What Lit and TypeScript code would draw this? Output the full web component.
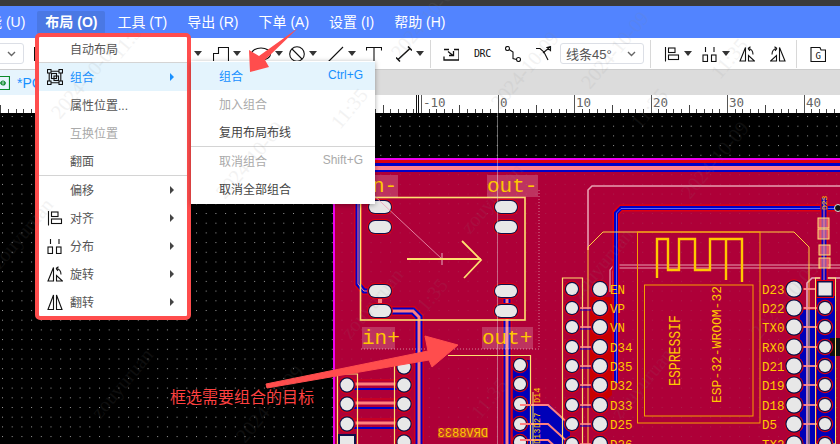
import { LitElement, html, css, svg } from "lit";
import { customElement } from "lit/decorators.js";

const ic = (body: unknown, w = 16) =>
  html`<svg class="ic" width=${w} height="16" viewBox="0 0 ${w} 16">${body}</svg>`;

const I = {
  group: svg`<rect x=".5" y=".5" width="3.5" height="3.5"/><rect x="12" y=".5" width="3.5" height="3.5"/><rect x=".5" y="12" width="3.5" height="3.5"/><rect x="12" y="12" width="3.5" height="3.5"/><path d="M4 2.2H12M2.2 4V12M13.8 4V12M4 13.8H12"/><rect x="4.5" y="4.5" width="5" height="5"/><rect x="7" y="7" width="4.5" height="4.5"/>`,
  align: svg`<path d="M1.5 1V15.5"/><rect x="4.5" y="2" width="6.5" height="4.5"/><rect x="4.5" y="9" width="10" height="4.5"/>`,
  dist: svg`<path d="M3.5 1V6M12 1V6"/><rect x="1" y="9" width="4.5" height="6.5"/><rect x="9.5" y="9" width="4.5" height="6.5"/>`,
  rot: svg`<path d="M1 15L6.5 1.5V15Z"/><path d="M9.5 15H15.5L9.5 9.5Z"/><path d="M9 2.5Q14 3 14 8.5M9 2.5L11.5 .8M9 2.5L11 4.8"/>`,
  rot2: svg`<path d="M15 15L9.5 1.5V15Z"/><path d="M6.5 15H.5L6.5 9.5Z"/><path d="M7 2.5Q2 3 2 8.5M7 2.5L4.5 .8M7 2.5L5 4.8"/>`,
  flip: svg`<path d="M1 15.5L6.5 1V15.5Z"/><path d="M9.5 15.5V1L15 15.5Z"/>`,
  step: svg`<path d="M.5 15V7.5H5.5V1.5H15.5V15"/>`,
  oval: svg`<ellipse cx="10" cy="8" rx="9.5" ry="6"/>`,
  nope: svg`<circle cx="8" cy="8" r="7.3"/><path d="M3 3L13 13"/>`,
  line: svg`<path d="M.5 15.5L15 1"/>`,
  bar: svg`<path d="M1.2 1V15" stroke-width="2.4"/>`,
  text: svg`<path d="M.5 4.5V1.5H15.5V4.5M8 1.5V16"/>`,
  dim: svg`<path d="M1.5 14L14.5 2M0 11.5L4 15.5M12 .5L16 4.5" stroke-width="1.5"/>`,
  swap: svg`<path d="M1 3.5H6M11 3.5H16V14H1V10.5M5 5.5L10 9.5M10.5 5V9.5H6" stroke-width="1.3"/>`,
  route: svg`<circle cx="2.5" cy="2.5" r="2"/><circle cx="13.5" cy="13.5" r="2"/><path d="M4.2 3.5L8 6V12.5L11.5 13.5"/>`,
  fan: svg`<path d="M0 2.5H4L8 6L12 14"/><path d="M7 7L14 1M14.5 .5V4.5L11 1.5Z" />`,
  folder: svg`<path d="M1 15.5V1.5H10L11 4H15.5V15.5Z"/><text x="8.2" y="13" class="g">G</text>`,
};

const menuRows: any[] = [
  { t: "自动布局", first: true },
  { sep: true },
  { t: "组合", icon: I.group, arrow: true, on: true },
  { t: "属性位置..." },
  { t: "互换位置", off: true },
  { t: "翻面" },
  { sep: true },
  { t: "偏移", arrow: true },
  { t: "对齐", icon: I.align, arrow: true },
  { t: "分布", icon: I.dist, arrow: true },
  { t: "旋转", icon: I.rot, arrow: true },
  { t: "翻转", icon: I.flip, arrow: true },
];

const subRows: any[] = [
  { t: "组合", k: "Ctrl+G", on: true },
  { t: "加入组合", off: true },
  { t: "复用布局布线" },
  { sep: true },
  { t: "取消组合", k: "Shift+G", off: true },
  { t: "取消全部组合" },
];

const RED = "#e00010";
const NAVY = "#10104a";

function pad(x: number, y: number, r: number) {
  return svg`<circle cx=${x} cy=${y} r=${r + 2.2} fill=${RED}/><circle cx=${x} cy=${y} r=${r + 1.2} fill=${NAVY}/><circle cx=${x} cy=${y} r=${r} fill="#e8e8e8"/>`;
}
function oval(x: number, y: number) {
  return svg`<rect x=${x - 13} y=${y - 8} width="26" height="16" rx="8" fill=${RED}/><rect x=${x - 12} y=${y - 7} width="24" height="14" rx="7" fill=${NAVY}/><rect x=${x - 11} y=${y - 6} width="22" height="12" rx="6" fill="#e8e8e8"/>`;
}
function trace(d: string, w = 3) {
  return svg`<path d=${d} fill="none" stroke=${RED} stroke-width=${w + 6.5}/><path d=${d} fill="none" stroke="#0000c8" stroke-width=${w + 4}/><path d=${d} fill="none" stroke="#ff8080" stroke-width=${w}/>`;
}
function silk(x: number, y: number, t: string, size = 12.5) {
  return svg`<text x=${x} y=${y} class="silk" font-size=${size}>${t}</text>`;
}
function big(x: number, y: number, w: number, t: string) {
  return svg`<rect x=${x} y=${y} width=${w} height="22" fill="#fff" opacity=".2"/><text x=${x} y=${y + 17} class="silk" font-size="21">${t}</text>`;
}

const rowY = [289, 308, 327, 347, 366, 385, 405, 424, 444];
const leftNames = ["EN", "VP", "VN", "D34", "D35", "D32", "D33", "D25", "D26"];
const rightNames = ["D23", "D22", "TX0", "RX0", "D21", "D19", "D18", "D5", "TX2"];

@customElement("app-root")
export class AppRoot extends LitElement {
  static styles = css`
    :host {
      display: block;
      width: 840px;
      height: 444px;
      position: relative;
      overflow: hidden;
      background: #000;
      font-family: "Liberation Sans", "Noto Sans CJK SC", sans-serif;
    }
    .top { height: 6px; background: #3a3a3a; }
    .menubar {
      height: 32px;
      background: #5284ff;
      display: flex;
      align-items: center;
      gap: 4px;
      margin-left: -34px;
      color: #fff;
      font-size: 14px;
    }
    .mi { padding: 0 8px; height: 23px; line-height: 23px; border-radius: 2px; white-space: nowrap; }
    .mi.act { background: #4a78e4; font-weight: 700; }
    .toolbar {
      height: 32px;
      box-sizing: border-box;
      background: #fff;
      border-bottom: 1px solid #ccc;
      display: flex;
      align-items: center;
      overflow: hidden;
    }
    .toolbar > * { flex: none; }
    .ic { display: block; fill: none; stroke: #111; stroke-width: 1.1; flex: none; }
    .g { font: 9px "DejaVu Sans Mono", monospace; fill: #111; stroke: none; text-anchor: middle; }
    .select {
      height: 21px;
      box-sizing: border-box;
      border: 1px solid #dcdfe6;
      border-radius: 3px;
      display: flex;
      align-items: center;
      justify-content: space-between;
      font-size: 13px;
      color: #555;
      padding: 0 7px 0 5px;
    }
    .select.a { width: 84px; margin-left: -60px; }
    .select.b { width: 84px; margin-left: 8px; }
    .chev { width: 9px; height: 6px; fill: none; stroke: #666; stroke-width: 1.4; flex: none; }
    .caret { width: 0; height: 0; border: 4px solid transparent; border-top: 5px solid #333; border-bottom: 0; margin-left: 4px; }
    .sep { width: 1px; height: 28px; background: #d8d8d8; }
    .m6 { margin-left: 6px; }
    .m7 { margin-right: 7px; }
    .r6 { margin-right: 6px; }
    .m9 { margin-right: 9px; }
    .m10 { margin-right: 10px; }
    .m11 { margin-right: 11px; }
    .m12 { margin-right: 12px; }
    .m13 { margin-right: 13px; }
    .m14 { margin-right: 14px; }
    .m15 { margin-right: 15px; }
    .filler { width: 60px; }
    .drc { width: 16px; font: 10px "DejaVu Sans Mono", monospace; letter-spacing: -.4px; color: #111; }
    .tabs {
      height: 25px;
      background: #dcdcdc;
      display: flex;
    }
    .tab {
      width: 60px;
      background: #e6f4fd;
      display: flex;
      align-items: center;
      gap: 7px;
      color: #1890ff;
      font-size: 14px;
      overflow: hidden;
    }
    .tabic { width: 10px; height: 14px; flex: none; fill: none; stroke: #0a8a2a; stroke-width: 1.2; }
    .ruler { display: block; width: 840px; height: 18px; background: #fff; }
    .ruler text { font: 12.5px "DejaVu Sans Mono", monospace; fill: #666; }
    .canvas { display: block; width: 840px; height: 331px; }
    .silk { font-family: "Liberation Mono", "DejaVu Sans Mono", monospace; fill: #ffc800; }
    .note { font-family: "Noto Sans CJK SC", sans-serif; font-size: 16px; fill: #ff4040; }
    .menu {
      position: absolute;
      left: 35px;
      top: 33px;
      width: 156px;
      box-sizing: border-box;
      background: #fff;
      border: 4px solid #ff4d4d;
      border-radius: 5px;
      font-size: 12px;
      color: #555;
    }
    .sub {
      position: absolute;
      left: 191px;
      top: 61px;
      width: 184px;
      box-sizing: border-box;
      padding: 1px 0;
      background: #fff;
      box-shadow: 0 1px 5px rgba(0, 0, 0, .35);
      font-size: 12px;
      color: #444;
    }
    .row {
      height: 28px;
      box-sizing: border-box;
      display: flex;
      align-items: center;
      position: relative;
      white-space: nowrap;
    }
    .menu .row { padding: 0 13px 2px 31px; }
    .sub .row { padding: 0 12px 2px 28px; justify-content: space-between; }
    .row.first { height: 25px; }
    .row.on { background: #e4f4fd; color: #1890ff; }
    .row.off { color: #aaa; }
    .row .mic { position: absolute; left: 8px; top: 6px; }
    .arrow { margin-left: auto; margin-top: 2px; width: 0; height: 0; border: 4px solid transparent; border-left: 4px solid #444; border-right: 0; }
    .row.on .arrow { border-left-color: #1890ff; }
    .line { height: 1px; background: #d4d4d4; }
    .over { position: absolute; left: 0; top: 0; width: 840px; height: 444px; pointer-events: none; }
    .wm { font: 20px "Liberation Serif", serif; fill: #888; opacity: .1; }
  `;

  private renderRows(rows: any[]) {
    return rows.map((r) =>
      r.sep
        ? html`<div class="line"></div>`
        : html`<div class="row ${r.first ? "first" : ""} ${r.on ? "on" : ""} ${r.off ? "off" : ""}">
            ${r.icon ? html`<span class="mic">${ic(r.icon)}</span>` : ""}
            <span>${r.t}</span>
            ${r.k ? html`<span>${r.k}</span>` : ""}
            ${r.arrow ? html`<span class="arrow"></span>` : ""}
          </div>`
    );
  }

  private renderRuler() {
    const ticks = [];
    for (let k = -70; k <= 45; k++) {
      const x = Math.round(497.5 + 7.65 * k) + 0.5;
      const h = k % 10 === 0 ? 18 : k % 5 === 0 ? 8 : 4;
      ticks.push(svg`<path d="M${x} ${18 - h}V18" stroke=${k % 10 === 0 ? "#555" : "#444"}/>`);
      if (k % 10 === 0 && k >= -10)
        ticks.push(svg`<text x=${x + 1.5} y="12">${k === -10 ? "-10" : k}</text>`);
    }
    return html`<svg class="ruler" viewBox="0 0 840 18">
      ${ticks}
      <path d="M416.5 0V18M418.5 0V18" stroke="#111"/>
    </svg>`;
  }

  private renderBoard() {
    const lower = [385, 404, 424, 442];
    return svg`
      <defs>
        <pattern id="dots" width="9.7" height="9.7" patternUnits="userSpaceOnUse" x="2" y="116">
          <rect width="1" height="1" fill="#9a9a9a"/>
        </pattern>
      </defs>
      <rect x="0" y="113" width="840" height="331" fill="#000"/>
      <rect x="0" y="113" width="840" height="331" fill="url(#dots)"/>

      <rect x="333" y="158" width="507" height="286" fill="#ae0038"/>
      <rect x="333" y="158" width="507" height="286" fill="url(#dots)" opacity=".2"/>
      <rect x="333" y="158" width="507" height="2" fill="#f000f0"/>
      <rect x="333" y="158" width="2" height="286" fill="#f000f0"/>
      <rect x="335" y="160" width="505" height="3" fill="#e00010"/>
      <rect x="335" y="163" width="505" height="3" fill="#0000c8"/>
      <rect x="335" y="166" width="505" height="4" fill="#ff7f8f"/>
      <rect x="335" y="170" width="505" height="2" fill="#0000c8"/>

      <!-- copper zones -->
      <path d="M590 297H612V395L600 405H590Z" fill="#c80000"/>
      <path d="M513 360H530V405H550L570 425V444H513Z" fill="#0000b8"/>
      <path d="M800 310H815V444H800ZM817 296H836V444H817Z" fill="#0000b8"/>
      <rect x="830" y="338" width="10" height="18" fill="#111"/>

      <!-- pale outline traces -->
      <path d="M588 250V190L592 186H840" fill="none" stroke="#e8a0b0" stroke-width="1.6"/>
      <path d="M610 292V270L614 265H840M613 292V271L616 268H840" fill="none" stroke="#e8a0b0" stroke-width="1.2"/>
      <path d="M807 444V283L812 278H840" fill="none" stroke="#e8a8c0" stroke-width="1.6"/>
      <path d="M616 383V213L621 208H840" fill="none" stroke=${RED} stroke-width="7"/>
      <path d="M616 383V213L621 208H840" fill="none" stroke="#0000c8" stroke-width="4"/>
      <path d="M616.5 383V213L621 208.5H840" fill="none" stroke="#7080ff" stroke-width=".8"/>

      <!-- module arrow selection -->
      ${trace("M358 178V284L364 291H372", 1)}
      ${trace("M380 311H413L419 317V444", 3)}
      ${trace("M507 291V444", 3)}
      <path d="M380 291V311" stroke="#ff8080" stroke-width="4"/>
      <rect x="360.5" y="197.5" width="164.5" height="122.5" fill="none" stroke="#ffe070" stroke-width="1.6"/>
      ${[207, 227, 291, 311].map((y) => svg`${oval(380, y)}${oval(506, y)}`)}
      <path d="M368 190L442 259" stroke="#f0a0b8" stroke-width=".8"/>
      <path d="M442 253V265M436 259H448" stroke="#fff" stroke-width=".7"/>
      <path d="M407 259H481M462 241L481 260L464 278" fill="none" stroke="#ffe070" stroke-width="1.8"/>
      <path d="M497.5 113V444" stroke="#e8e8e8" stroke-width=".8" opacity=".55"/>
      <path d="M539 190V349H359" fill="none" stroke="#e0a0b0" stroke-width=".8" stroke-dasharray="1 2"/>
      <path d="M448 355.5H530.5V444" fill="none" stroke="#ffe070" stroke-width="1.2"/>
      ${big(372, 175, 26, "n-")}
      ${big(487, 175, 51, "out-")}
      ${big(362, 327, 33, "in+")}
      ${big(482, 327, 51, "out+")}

      <!-- lower left header -->
      ${[385, 404, 424].map(
        (y) => svg`<path d="M347 ${y - 1}H404" stroke="#ff8080" stroke-width="3"/><path d="M347 ${y + 4}H404" stroke="#0000c8" stroke-width="2"/><path d="M347 ${y - 5}H404" stroke=${RED} stroke-width="1"/>`
      )}
      <path d="M337.5 444V374H357.5V444M394.5 444V365" fill="none" stroke="#ffe070" stroke-width="1.2"/>
      ${pad(404, 367, 6.5)}
      ${lower.map((y) => pad(404, y, 6.5))}
      ${lower.slice(0, 3).map((y) => pad(347, y, 6.5))}
      <rect x="338" y="434" width="18" height="14" fill=${NAVY}/><rect x="340" y="436" width="14" height="12" fill="#e8e8e8"/>

      <!-- middle header -->
      ${[365, 384, 404, 424, 442].map((y) => pad(520, y, 6))}
      ${[405, 424, 440].map((y) => svg`<path d="M520 ${y}H548L570 ${y + 20}" fill="none" stroke="#ff8080" stroke-width="2"/>`)}
      <text class="silk" font-size="8.5" transform="translate(540 428) rotate(-90)">D27</text>
      <text class="silk" font-size="8.5" transform="translate(540 403) rotate(-90)">D14</text>
      <text class="silk" font-size="8.5" transform="translate(540 444) rotate(-90)">D13</text>
      <path d="M533 392V444" fill="none" stroke="#ffe070" stroke-width="1"/>
      <rect x="438" y="428" width="50" height="10" fill="#ffc800" opacity=".25"/>
      <text class="silk" font-size="12" transform="translate(488 437) scale(-1 1)">DRV8833</text>

      <!-- ESP module outline -->
      <path d="M588 444V247L603 232H794L809 247V444" fill="none" stroke="#ffd040" stroke-width="1"/>
      <rect x="637.5" y="232" width="122.5" height="191" fill="none" stroke="#f5a000" stroke-width="1"/>
      <rect x="644.5" y="285" width="108.5" height="131" fill="none" stroke="#f5a000" stroke-width="1"/>
      <path d="M657 278V239H668V270H679V239H695V270H710V239H742V282M726 239V280" fill="none" stroke="#ffc800" stroke-width="2.4"/>
      <text class="silk" font-size="16" textLength="71" lengthAdjust="spacingAndGlyphs" transform="translate(680 386) rotate(-90)">ESPRESSIF</text>
      <text class="silk" font-size="13" transform="translate(721 403) rotate(-90)">ESP-32-WROOM-32</text>

      <!-- left headers -->
      <path d="M562.5 444V278H582.5V444" fill="none" stroke="#ffe070" stroke-width="1.2"/>
      ${rowY.slice(1).map((y) => svg`<path d="M572 ${y}H600" stroke="#ff9090" stroke-width="1.6"/><path d="M572 ${y + 2}H600" stroke="#0000c8" stroke-width="1"/>`)}
      ${rowY.map((y) => pad(572, y, 6))}
      ${rowY.map((y) => pad(600, y, 7))}
      ${leftNames.map((n, i) => silk(610, rowY[i] + 4.5, n))}

      <!-- right headers -->
      ${rowY.slice(0, 8).map((y) => svg`<path d="M794 ${y}H825" stroke="#ff9090" stroke-width="1.8"/>`)}
      <rect x="815.5" y="278" width="20" height="166" fill="none" stroke="#ffe070" stroke-width="1"/>
      ${trace("M824 198V289", 1)}
      ${rowY.map((y) => pad(794, y, 7.5))}
      ${rowY.slice(1).map((y) => pad(825, y, 6))}
      <rect x="816" y="280" width="18" height="18" fill=${RED}/>
      <rect x="817" y="281" width="16" height="16" fill=${NAVY}/>
      <rect x="818.5" y="282.5" width="13" height="13" fill="#e8e8e8"/>
      ${rightNames.map((n, i) => silk(762, rowY[i] + 4.5, n))}
      ${[[818, 218], [818, 229], [819, 245], [819, 258]].map(
        ([x, y]) => svg`<rect x=${x} y=${y} width="11" height="10" fill="#ff9090" fill-opacity=".6" stroke="#ffe070" stroke-width="1"/>`
      )}
      <text class="silk" font-size="8" transform="translate(827 210) rotate(-90)">D23</text>
      <circle cx="838" cy="208" r="3.5" fill="#111" stroke="#ddd" stroke-width="1"/>
      <text x="170" y="403" class="note">框选需要组合的目标</text>
    `;
  }

  render() {
    const menus = ["功能 (U)", "布局 (O)", "工具 (T)", "导出 (R)", "下单 (A)", "设置 (I)", "帮助 (H)"];
    const wm: [number, number, string][] = [
      [60, 120, "2024-10-09"], [120, 60, "11:35"], [0, 270, "zouyuruan"], [100, 420, "zouyuruan"],
      [225, 200, "2024-10-09"], [340, 130, "11:35"], [400, 60, "2024-10-09"], [245, 444, "2024-10-09"],
      [350, 340, "zouyuruan"], [470, 235, "zouyuruan"], [500, 110, "2024-10-09"], [640, 130, "11:35"],
      [590, 90, "2024-10-09"], [720, 80, "11:35"], [580, 300, "zouyuruan"], [690, 200, "2024-10-09"],
      [480, 420, "11:35"], [620, 420, "zouyuruan"], [760, 340, "2024-10-09"], [420, 320, "11:35"],
    ];
    return html`
      <div class="top"></div>
      <div class="menubar">
        ${menus.map((m, i) => html`<div class="mi ${i === 1 ? "act" : ""}">${m}</div>`)}
      </div>
      <div class="toolbar">
        <div class="select a"><span></span><svg class="chev" viewBox="0 0 9 6"><path d="M1 1L4.5 4.5L8 1"/></svg></div>
        <div class="m10"></div>
        <div class="m7">${ic(I.bar)}</div>
        <div class="m7">${ic(I.line)}</div>
        <div class="m7">${ic(I.line)}</div>
        <div class="filler m11"></div>
        ${ic(I.line)}<span class="caret m11"></span>
        ${ic(I.step)}<span class="caret m10"></span>
        ${ic(I.oval, 20)}<span class="caret r6"></span>
        ${ic(I.nope)}<span class="caret m11"></span>
        ${ic(I.line)}<span class="caret m10"></span>
        <span class="m14">${ic(I.text)}</span>
        ${ic(I.dim)}<span class="caret"></span>
        <span class="sep m6 m12"></span>
        <span class="m15">${ic(I.swap)}</span>
        <span class="drc m15">DRC</span>
        <span class="m15">${ic(I.route)}</span>
        ${ic(I.fan)}
        <div class="select b"><span>线条45°</span><svg class="chev" viewBox="0 0 9 6"><path d="M1 1L4.5 4.5L8 1"/></svg></div>
        <span class="sep m6 m13"></span>
        ${ic(I.align)}<span class="caret m10"></span>
        ${ic(I.dist)}<span class="caret m9"></span>
        <span class="m15">${ic(I.rot)}</span>
        <span class="m10">${ic(I.rot2)}</span>
        <span class="sep m13"></span>
        ${ic(I.folder)}
      </div>
      <div class="tabs">
        <div class="tab">
          <svg class="tabic" viewBox="0 0 10 14"><path d="M-1 .5H9.5V13.5H-1M-1 7H6"/><circle cx="3" cy="7" r="2"/></svg>
          <span>*PCB1</span>
        </div>
      </div>
      ${this.renderRuler()}
      <svg class="canvas" viewBox="0 113 840 331">${this.renderBoard()}</svg>

      <div class="menu">${this.renderRows(menuRows)}</div>
      <div class="sub">${this.renderRows(subRows)}</div>

      <svg class="over" viewBox="0 0 840 444">
        <path d="M298 28L265 60L269 67L250 72L249 50L259 56Z" fill="#ff4d4d"/>
        <path d="M266 384L428 351L425 336L458 345L432 367L429 360L267 388Z" fill="#ff4d4d" stroke="#ff4d4d" stroke-linejoin="round"/>
        ${wm.map(([x, y, t]) => svg`<text class="wm" transform="translate(${x} ${y}) rotate(-50)">${t}</text>`)}
      </svg>
    `;
  }
}
